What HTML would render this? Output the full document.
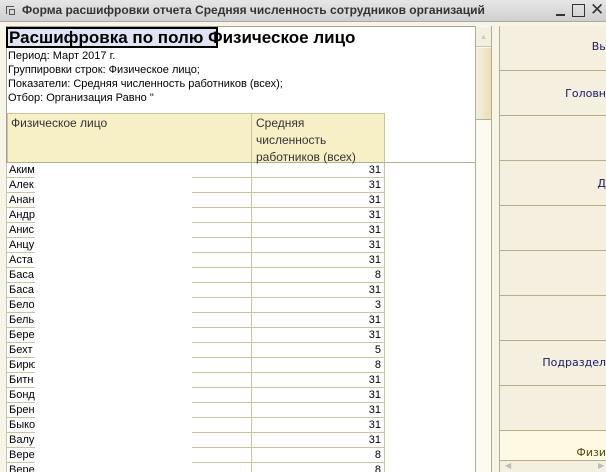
<!DOCTYPE html>
<html><head><meta charset="utf-8"><style>
*{margin:0;padding:0;box-sizing:border-box}
html,body{width:606px;height:472px;overflow:hidden}
body{background:#f7f4e8;font-family:"Liberation Sans",sans-serif;position:relative}
.abs{position:absolute}
#tb{left:0;top:0;width:606px;height:22px;background:linear-gradient(#e6e6e6,#cfcfcf);border-bottom:1px solid #a8a8a8}
#tb .t{left:22px;top:3px;font-size:12px;font-weight:bold;color:#333;white-space:nowrap}
#left{left:6px;top:26px;width:486px;height:446px;background:#fff;border-left:1px solid #a8a48a;border-top:1px solid #a8a48a}
.txt{font-size:11px;color:#000;white-space:nowrap}
.row{position:absolute;left:7px;width:377px;height:15px;border-bottom:1px solid #c8c4a0;font-size:11px}
.row .n{position:absolute;left:2px;top:1px}
.row .v{position:absolute;right:3px;top:1px}
.row .d{position:absolute;left:244px;top:0;width:1px;height:15px;background:#c8c4a0}
.mask{position:absolute;left:35px;width:157px;background:#fff}
.rc{position:absolute;left:500px;width:106px;height:45px;border-bottom:1px solid #b4ae8c;background:#f4efdf;font-family:"DejaVu Sans",sans-serif;font-size:11px;color:#1a1a6a;white-space:nowrap}
.rc span{position:absolute}
</style></head><body>
<div id="tb" class="abs">
<div class="abs" style="left:6px;top:6px;width:8px;height:8px;border:1px solid #555;border-right:none;border-bottom:none"></div>
<div class="abs" style="left:9px;top:9px;width:6px;height:6px;border:1px solid #555"></div>
<div class="abs t">Форма расшифровки отчета Средняя численность сотрудников организаций</div>
<div class="abs" style="left:556px;top:14px;width:9px;height:2px;background:#333"></div>
<div class="abs" style="left:572px;top:4px;width:13px;height:13px;border:1.5px solid #333"></div>
<div class="abs" style="left:590px;top:0px;font-size:17px;color:#333">✕</div>
</div>
<div id="left" class="abs"></div>
<div class="abs" style="left:6px;top:27px;width:212px;height:21px;background:#dfe4f4;border:2px solid #000"></div>
<div class="abs" style="left:9px;top:28px;font-size:17px;font-weight:bold;white-space:nowrap">Расшифровка по полю Физическое лицо</div>
<div class="abs txt" style="left:8px;top:50px">Период: Март 2017 г.</div>
<div class="abs txt" style="left:8px;top:64px">Группировки строк: Физическое лицо;</div>
<div class="abs txt" style="left:8px;top:78px">Показатели: Средняя численность работников (всех);</div>
<div class="abs txt" style="left:8px;top:92px">Отбор: Организация Равно "</div>
<div class="abs" style="left:7px;top:113px;width:378px;height:50px;background:#f7efc6;border:1px solid #c8c4a0"></div>
<div class="abs" style="left:251px;top:113px;width:1px;height:50px;background:#c8c4a0"></div>
<div class="abs" style="left:7px;top:162px;width:468px;height:1px;background:#b4ae8c"></div>
<div class="abs txt" style="left:11px;top:116px;font-size:12px;color:#333">Физическое лицо</div>
<div class="abs" style="left:256px;top:115px;font-size:12px;line-height:17px;color:#333">Средняя<br>численность<br>работников (всех)</div>
<div id="rows"></div>
<script>
var d=[["Аким",31],["Алек",31],["Анан",31],["Андр",31],["Анис",31],["Анцу",31],["Аста",31],["Баса",8],["Баса",31],["Бело",3],["Бель",31],["Бере",31],["Бехт",5],["Бирю",8],["Битн",31],["Бонд",31],["Брен",31],["Быко",31],["Валу",31],["Вере",8],["Вере",8]];
var h="";d.forEach(function(r,i){var y=163+i*15;h+='<div class="row" style="top:'+y+'px"><span class="n">'+r[0]+'</span><div class="d"></div><span class="v">'+r[1]+'</span></div>';});
h+='<div class="mask" style="top:163px;height:309px"></div>';
document.getElementById("rows").innerHTML=h;
</script>
<div class="abs" style="left:6px;top:163px;width:1px;height:309px;background:#c8c4a0"></div>
<div class="abs" style="left:384px;top:163px;width:1px;height:309px;background:#c8c4a0"></div>
<div class="abs" style="left:475px;top:26px;width:17px;height:446px;background:#fcfaf2;border-left:1px solid #b4ae8c;border-right:1px solid #b4ae8c"></div>
<div class="abs" style="left:476px;top:27px;width:15px;height:20px;border-bottom:1px solid #c8c4a0;background:#f4f0e0;color:#ccc;font-size:8px;text-align:center;line-height:20px">▲</div>
<div class="abs" style="left:476px;top:48px;width:15px;height:72px;background:linear-gradient(90deg,#f4efdc,#e8e0b8);border-bottom:1px solid #b4ae8c"></div>
<div class="abs" style="left:499px;top:26px;width:1px;height:446px;background:#b4ae8c"></div>
<div class="rc" style="top:26px"><span style="top:14px;right:-2px">Вы</span></div>
<div class="rc" style="top:71px"><span style="top:16px;right:0">Головн</span></div>
<div class="rc" style="top:116px"></div>
<div class="rc" style="top:161px"><span style="top:16px;right:0">Д</span></div>
<div class="rc" style="top:206px"></div>
<div class="rc" style="top:251px"></div>
<div class="rc" style="top:296px"></div>
<div class="rc" style="top:341px"><span style="top:15px;right:0">Подраздел</span></div>
<div class="rc" style="top:386px"></div>
<div class="rc" style="top:431px;height:30px;background:#fdf9e2;color:#5a4a10"><span style="top:15px;right:0">Физи</span></div>
<div class="abs" style="left:500px;top:461px;width:106px;height:11px;background:#f4f0e0;color:#bbb;font-size:8px"><span style="position:absolute;left:5px">◀</span><span style="position:absolute;left:98px">▶</span></div>
</body></html>
